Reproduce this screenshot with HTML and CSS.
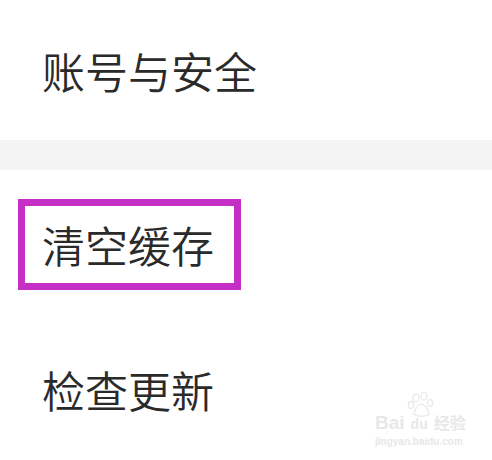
FILE: index.html
```html
<!DOCTYPE html>
<html lang="zh-CN">
<head>
<meta charset="utf-8">
<link rel="stylesheet" href="styles.css">
</head>
<body>
<div class="page">
  <div class="row row-first"><span class="label">账号与安全</span></div>
  <div class="band"></div>
  <div class="row row-mid"><span class="label highlight">清空缓存</span></div>
  <div class="row row-last">
    <span class="label">检查更新</span>
    <div class="watermark">
      <svg class="paw" width="30" height="26" viewBox="0 0 30 26">
        <g fill="none" stroke="#ececec" stroke-width="1.5">
          <ellipse cx="9" cy="6" rx="3" ry="4"/>
          <ellipse cx="17" cy="4" rx="3" ry="4"/>
          <ellipse cx="4" cy="13" rx="2.6" ry="3.4"/>
          <ellipse cx="23" cy="11" rx="2.6" ry="3.4"/>
          <path d="M7 22 C8 15 12 12 14 12 C17 12 21 16 22 22 C19 25 10 25 7 22 Z"/>
        </g>
      </svg>
      <div class="wm-line"><span class="wm-bai">Bai</span><span class="wm-du">du</span><span class="wm-cn">经验</span></div>
      <div class="wm-url">jingyan.baidu.com</div>
    </div>
  </div>
</div>
</body>
</html>
```
FILE: styles.css
```css
html, body {
  margin: 0;
  padding: 0;
  background: #ffffff;
}
.page {
  width: 492px;
  height: 460px;
  overflow: hidden;
  display: flex;
  flex-direction: column;
  font-family: "Noto Sans CJK SC", "Noto Sans", sans-serif;
  color: #2a2a2a;
}
.row {
  display: flex;
  align-items: center;
  padding-left: 42px;
  box-sizing: border-box;
  position: relative;
}
.row-first { height: 140px; }
.row-mid { height: 148px; }
.row-last { height: 142px; }
.band {
  height: 30px;
  background: #f4f4f4;
}
.label {
  font-size: 43px;
  line-height: 43px;
  font-weight: 350;
}
.highlight {
  margin-left: -24px;
  border: 7px solid #c52fc6;
  padding: 17px 20px 17px 17px;
}
.watermark {
  position: absolute;
  left: 375px;
  top: 84px;
  width: 92px;
  color: #e8e8e8;
  font-family: "Liberation Sans", sans-serif;
}
.paw {
  position: absolute;
  left: 32px;
  top: -10px;
}
.wm-line {
  position: relative;
  margin-top: 10px;
  display: flex;
  align-items: baseline;
  gap: 2px;
  font-size: 19px;
  line-height: 20px;
  font-weight: bold;
}
.wm-du {
  font-size: 14px;
  margin-left: 4px;
}
.wm-cn {
  font-family: "Noto Sans CJK SC", sans-serif;
  font-size: 16px;
  margin-left: 4px;
}
.wm-url {
  font-size: 10px;
  margin-top: 2px;
  font-weight: bold;
}
```
